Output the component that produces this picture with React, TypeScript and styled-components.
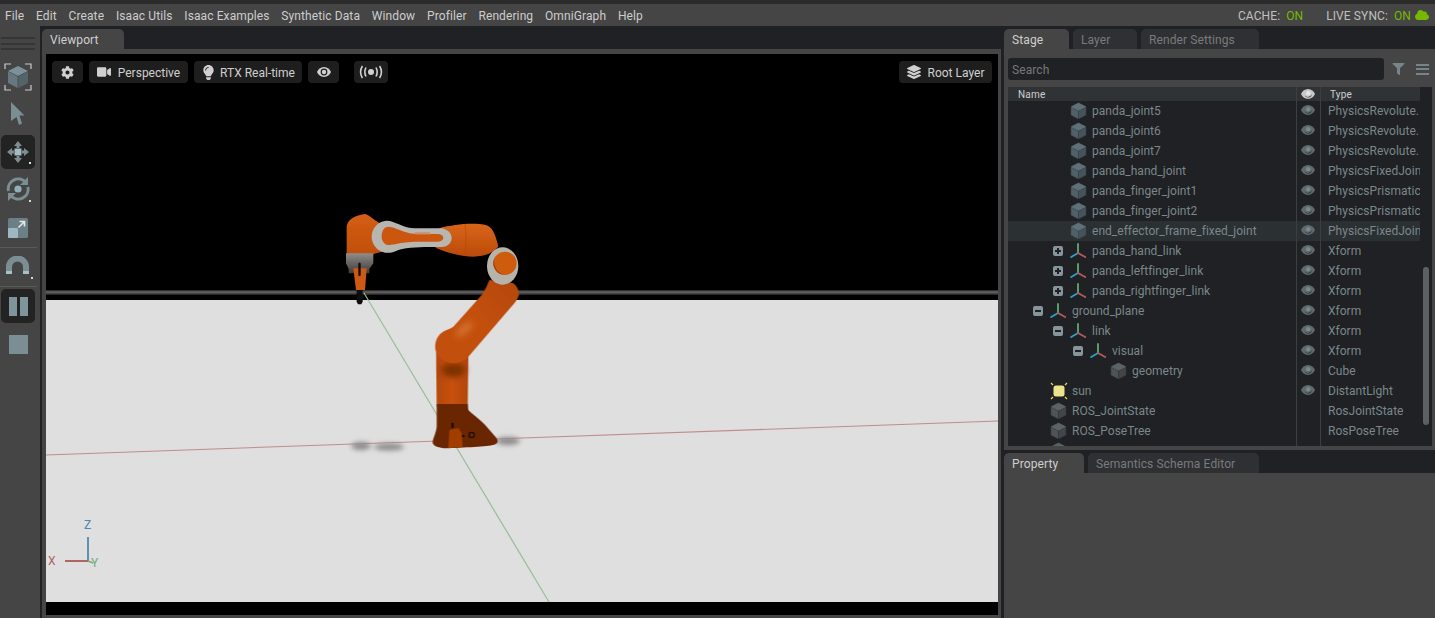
import React from 'react';
import styled, { createGlobalStyle } from 'styled-components';
import { FaCog, FaVideo, FaLightbulb, FaFilter, FaCloud, FaLayerGroup } from 'react-icons/fa';

const FONT = '"Roboto", "Liberation Sans", sans-serif';
const PANEL = '#454545';
const DARK = '#1f2124';

const GlobalStyle = createGlobalStyle`
  html, body { margin: 0; padding: 0; background: ${DARK}; overflow: hidden; }
  * { box-sizing: border-box; }
  body { font-family: ${FONT}; }
`;

const Page = styled.div`
  width: 1435px;
  height: 618px;
  display: flex;
  flex-direction: column;
  padding-top: 4px;
  background: #2b2b2b;
  overflow: hidden;
`;

const MenuBar = styled.div`
  height: 22px;
  flex: none;
  display: flex;
  align-items: center;
  justify-content: space-between;
  padding: 2px 6px 0 5px;
  background: ${PANEL};
  font-size: 12px;
  letter-spacing: 0.1px;
  color: #cdcdcd;
`;

const MenuItems = styled.div`
  display: flex;
  gap: 11.8px;
`;

const Status = styled.div`
  display: flex;
  align-items: center;
  font-size: 12px;
  color: #c0c0c0;
`;

const StatusOn = styled.span<{ $gap: number }>`
  color: #76b900;
  margin-left: 6px;
  margin-right: ${(p) => p.$gap}px;
`;

const CloudIcon = styled(FaCloud)`
  color: #76b900;
  width: 14px;
  height: 12px;
  margin-left: 4px;
  margin-top: -2px;
`;

const Workspace = styled.div`
  flex: 1;
  min-height: 0;
  display: flex;
  background: ${DARK};
`;

const ToolRail = styled.div`
  width: 40px;
  flex: none;
  display: flex;
  flex-direction: column;
  align-items: flex-start;
  padding: 11px 0 0 1px;
  background: ${PANEL};
`;

const Grip = styled.div`
  width: 34px;
  height: 13px;
  margin-bottom: 12px;
  border-top: 2px solid #353535;
  border-bottom: 2px solid #353535;
  &::after {
    content: '';
    display: block;
    height: 2px;
    margin-top: 3.5px;
    background: #353535;
  }
`;

const ToolSlot = styled.div<{ $active?: boolean; $height: number }>`
  width: 34px;
  height: ${(p) => p.$height}px;
  flex: none;
  display: flex;
  align-items: center;
  justify-content: center;
  border-radius: 5px;
  background: ${(p) => (p.$active ? '#232323' : 'transparent')};
`;

const RailLine = styled.div`
  width: 37px;
  height: 1px;
  flex: none;
  margin-left: -1px;
  background: #5a5a5a;
`;

const Gutter = styled.div<{ $width: number }>`
  width: ${(p) => p.$width}px;
  flex: none;
`;

const ViewportColumn = styled.div`
  width: 959px;
  flex: none;
  display: flex;
  flex-direction: column;
`;

const PropertyColumn = styled.div`
  width: 431px;
  flex: none;
  display: flex;
  flex-direction: column;
`;

const TabStrip = styled.div`
  height: 23px;
  flex: none;
  display: flex;
  align-items: flex-end;
  gap: 4px;
  background: ${DARK};
`;

const Tab = styled.div<{ $active?: boolean; $width: number }>`
  width: ${(p) => p.$width}px;
  height: 20px;
  padding: 2px 0 0 8px;
  display: flex;
  align-items: center;
  font-size: 12px;
  letter-spacing: 0.1px;
  border-radius: 5px 5px 0 0;
  color: ${(p) => (p.$active ? '#cfcfcf' : '#7a7a7a')};
  background: ${(p) => (p.$active ? PANEL : '#2f3033')};
`;

const ViewportFrame = styled.div`
  flex: 1;
  min-height: 0;
  padding: 5px 3px 3px 4px;
  background: ${PANEL};
`;

const Viewport = styled.div`
  position: relative;
  width: 100%;
  height: 100%;
  background: #000;
  overflow: hidden;
`;

const SceneSvg = styled.svg`
  display: block;
  width: 100%;
  height: 100%;
`;

const OverlayBar = styled.div`
  position: absolute;
  top: 7px;
  left: 6px;
  right: 6px;
  display: flex;
  gap: 6px;
`;

const OverlayButton = styled.div<{ $width: number; $push?: number; $right?: boolean; $gap?: number }>`
  width: ${(p) => p.$width}px;
  height: 22px;
  margin-left: ${(p) => (p.$right ? 'auto' : `${p.$push ?? 0}px`)};
  display: flex;
  align-items: center;
  justify-content: center;
  gap: ${(p) => p.$gap ?? 7}px;
  border-radius: 4px;
  background: #1e1e1e;
  color: #d0d0d0;
  font-size: 12px;
  svg {
    flex: none;
  }
`;

const OverlayLabel = styled.span`
  padding-top: 2px;
`;

const StagePanel = styled.div`
  height: 401px;
  flex: none;
  padding: 9px 3px 4px 4px;
  background: ${PANEL};
  display: flex;
  flex-direction: column;
`;

const SearchRow = styled.div`
  display: flex;
  align-items: center;
  height: 22px;
  flex: none;
  margin-bottom: 7px;
`;

const SearchBox = styled.div`
  width: 376px;
  height: 22px;
  flex: none;
  padding: 2px 0 0 4px;
  display: flex;
  align-items: center;
  font-size: 12px;
  letter-spacing: 0.1px;
  color: #777;
  background: ${DARK};
  border-radius: 3px;
`;

const FilterIcon = styled(FaFilter)`
  width: 13px;
  height: 12px;
  margin-left: 8px;
  color: #77858a;
`;

const MenuLines = styled.div`
  width: 13px;
  height: 11px;
  margin-left: 11px;
  border-top: 2px solid #77858a;
  border-bottom: 2px solid #77858a;
  &::after {
    content: '';
    display: block;
    height: 2px;
    margin-top: 2.5px;
    background: #77858a;
  }
`;

const TreeArea = styled.div`
  position: relative;
  flex: 1;
  min-height: 0;
  overflow: hidden;
  background: ${DARK};
`;

const HeaderRow = styled.div`
  width: 412px;
  height: 14px;
  display: flex;
  align-items: center;
  background: #2f3336;
  font-size: 10px;
  letter-spacing: 0.2px;
  color: #cfcfcf;
  padding-top: 1px;
`;

const Row = styled.div<{ $selected?: boolean }>`
  width: 412px;
  height: 20px;
  display: flex;
  align-items: center;
  font-size: 12px;
  letter-spacing: 0.02px;
  color: #7b878b;
  background: ${(p) => (p.$selected ? '#2b3033' : 'transparent')};
`;

const NameCell = styled.div<{ $level: number }>`
  width: 288px;
  height: 100%;
  flex: none;
  display: flex;
  align-items: center;
  padding-left: ${(p) => 25 + p.$level * 20}px;
  white-space: nowrap;
`;

const HeaderName = styled.div`
  width: 288px;
  flex: none;
  padding-left: 10px;
`;

const EyeCell = styled.div`
  width: 24px;
  height: 100%;
  flex: none;
  display: flex;
  align-items: flex-start;
  justify-content: center;
  padding-top: 4px;
`;

const HeaderEye = styled.div`
  width: 24px;
  flex: none;
  display: flex;
  justify-content: center;
  margin-top: -1px;
`;

const TypeCell = styled.div`
  flex: 1;
  min-width: 0;
  padding-left: 8px;
  overflow: hidden;
  white-space: nowrap;
`;

const HeaderType = styled.div`
  padding-left: 10px;
`;

const Expander = styled.div`
  width: 17px;
  flex: none;
  display: flex;
`;

const IconSlot = styled.div`
  width: 22px;
  flex: none;
  display: flex;
`;

const ColumnLine = styled.div<{ $left: number }>`
  position: absolute;
  top: 0;
  bottom: 0;
  left: ${(p) => p.$left}px;
  width: 1px;
  background: #3c3f42;
`;

const ScrollThumb = styled.div`
  position: absolute;
  top: 180px;
  left: 415px;
  width: 6px;
  height: 158px;
  border-radius: 3px;
  background: #5d6063;
`;

const PropertyBody = styled.div`
  flex: 1;
  background: ${PANEL};
`;

const CubeIcon = ({ top, left, right }: { top: string; left: string; right: string }) => (
  <svg width="17" height="18" viewBox="0 0 17 18" strokeLinejoin="round">
    <path d="M8.5 1.2 15.6 4.8 8.5 8.4 1.4 4.8Z" fill={top} stroke={top} />
    <path d="M1.2 5.6 8.1 9.2v7.4L1.2 13Z" fill={left} stroke={left} strokeWidth="0.6" />
    <path d="M15.8 5.6 8.9 9.2v7.4l6.9-3.6Z" fill={right} stroke={right} strokeWidth="0.6" />
  </svg>
);

const XformIcon = () => (
  <svg width="17" height="18" viewBox="0 0 17 18" fill="none" strokeWidth="1.9" strokeLinecap="round">
    <path d="M8 10.5V2" stroke="#5fa36c" />
    <path d="M8 11 1.2 15" stroke="#2f9fc4" />
    <path d="M8 11 15.2 15" stroke="#b5595a" />
  </svg>
);

const SunIcon = () => (
  <svg width="18" height="18" viewBox="0 0 18 18" fill="none">
    <rect x="3.5" y="3.5" width="11" height="11" rx="2.5" fill="#ece48c" />
    <path d="M1 1 3 3M17 1 15 3M1 17 3 15M17 17 15 15" stroke="#e8d85c" strokeWidth="1.2" />
  </svg>
);

const TreeToggle = ({ open }: { open: boolean }) => (
  <svg width="10" height="10" viewBox="0 0 10 10">
    <rect width="10" height="10" rx="2" fill="#87959a" />
    <rect x="2" y="4" width="6" height="2" fill={DARK} />
    {!open && <rect x="4" y="2" width="2" height="6" fill={DARK} />}
  </svg>
);

const EyeIcon = ({ color = '#5f6a6e', hole = '#2a2f32', pupil = '#7d888b' }: { color?: string; hole?: string; pupil?: string }) => (
  <svg width="14" height="10" viewBox="0 0 14 10">
    <path d="M7 0C3.6 0 1.2 2.4 0 5c1.2 2.6 3.6 5 7 5s5.8-2.4 7-5C12.8 2.4 10.4 0 7 0Z" fill={color} />
    <path d="M3.6 6.2A3.8 3.8 0 0 0 10.9 5.2 4.2 4.2 0 0 1 3.6 6.2Z" fill={hole} />
    <circle cx="7.2" cy="4.2" r="2.2" fill={pupil} />
  </svg>
);

const ToolbarEye = () => (
  <svg width="14" height="10" viewBox="0 0 14 10">
    <path d="M7 0C3.6 0 1.2 2.4 0 5c1.2 2.6 3.6 5 7 5s5.8-2.4 7-5C12.8 2.4 10.4 0 7 0Z" fill="#d0d0d0" />
    <circle cx="7" cy="5" r="3.4" fill="#1e1e1e" />
    <circle cx="7" cy="5" r="2.2" fill="#d0d0d0" />
  </svg>
);

const BroadcastIcon = () => (
  <svg width="24" height="14" viewBox="0 0 24 14" fill="none" stroke="#d0d0d0" strokeWidth="1.6">
    <circle cx="12" cy="7" r="3" fill="#d0d0d0" stroke="none" />
    <path d="M7 2.5C5.6 5.2 5.6 8.8 7 11.5M17 2.5c1.4 2.7 1.4 6.3 0 9" />
    <path d="M3.4 1C1.2 4.6 1.2 9.4 3.4 13M20.6 1c2.2 3.6 2.2 8.4 0 12" />
  </svg>
);

const RailCube = () => (
  <svg width="28" height="28" viewBox="0 0 28 28" fill="none">
    <path d="M1 6V1h6M21 1h6v5M1 22v5h6M27 22v5h-6" stroke="#c8cdcf" strokeWidth="1.2" />
    <path d="M14 3 24 8 14 13 4 8Z" fill="#7b9098" />
    <path d="M4 8.5 13.6 13.5V25L4 20Z" fill="#66787f" />
    <path d="M24 8.5 14.4 13.5V25L24 20Z" fill="#52636a" />
  </svg>
);

const RailArrow = () => (
  <svg width="16" height="24" viewBox="0 0 16 24">
    <path d="M1 0 14.5 13.5H9.5L12 21.5 9 23 6.5 15 1 19Z" fill="#7b8e93" />
  </svg>
);

const RailMove = () => (
  <svg width="34" height="34" viewBox="0 0 34 34" fill="#7b8e93">
    <rect x="13.5" y="13.5" width="7" height="7" fill="#a3bbc2" />
    <path d="M17 6 21 11H18.5V13H15.5V11H13ZM17 28 13 23H15.5V21H18.5V23H21ZM6 17 11 13V15.5H13V18.5H11V21ZM28 17 23 21V18.5H21V15.5H23V13Z" />
    <rect x="28" y="27" width="2" height="2" fill="#e0e0e0" />
  </svg>
);

const RailRotate = () => (
  <svg width="30" height="26" viewBox="0 0 30 26" fill="none">
    <circle cx="15" cy="12" r="3.6" fill="#8fb0b8" />
    <path d="M5.5 14a10 10 0 0 1 17-9" stroke="#7b8e93" strokeWidth="3" />
    <path d="M25 10a10 10 0 0 1-17 9" stroke="#7b8e93" strokeWidth="3" />
    <path d="M25 0v8h-8ZM5 24v-8h8Z" fill="#7b8e93" />
    <rect x="26" y="23" width="2" height="2" fill="#d8d8d8" />
  </svg>
);

const RailScale = () => (
  <svg width="20" height="20" viewBox="0 0 20 20">
    <rect width="20" height="20" rx="1.5" fill="#6a7f86" />
    <rect y="10" width="10" height="10" rx="1" fill="#9fb8bf" />
    <path d="M10.5 9.5 16 4M11.5 3.5H16.5V8.5" stroke="#e6e6e6" strokeWidth="1.6" fill="none" />
  </svg>
);

const RailMagnet = () => (
  <svg width="30" height="24" viewBox="0 0 30 24" fill="none">
    <path d="M6 15V11a8.5 8.5 0 0 1 17 0v4" stroke="#7b8e93" strokeWidth="6" />
    <rect x="3" y="15" width="6" height="3" fill="#a8c0c6" />
    <rect x="20" y="15" width="6" height="3" fill="#a8c0c6" />
    <rect x="28" y="21" width="2" height="2" fill="#d8d8d8" />
  </svg>
);

const RailPause = () => (
  <svg width="19" height="19" viewBox="0 0 19 19" fill="#7e959b">
    <rect width="8" height="19" />
    <rect x="11" width="8" height="19" />
  </svg>
);

const RailStop = () => (
  <svg width="19" height="19" viewBox="0 0 19 19">
    <rect width="19" height="19" fill="#7b8e93" />
  </svg>
);

// Robot shapes are traced at 3x, hence the scale on the group.
const Robot = () => (
  <g transform="translate(330 200) scale(0.3333)" filter="url(#edge)">
    <path d="M318 430 415 465 413 620H320Z" fill="url(#lower)" />
    <ellipse cx="370" cy="510" rx="36" ry="22" fill="#7c3005" filter="url(#smudge)" />
    <path
      d="M320 612H413L415 630C435 650 455 662 470 680L500 715C505 722 504 730 496 733 480 740 420 742 350 745 325 744 310 738 308 728 308 715 318 700 320 680Z"
      fill="#6b2703"
    />
    <path d="M355 745 358 690 385 684 395 700 398 741Z" fill="#a23e05" />
    <circle cx="425" cy="705" r="8" fill="none" stroke="#1d0c00" strokeWidth="4" />
    <rect x="364" y="668" width="7" height="16" rx="3" fill="#1a0a00" />
    <circle cx="400" cy="708" r="4" fill="#1a0a00" />

    <path
      d="M478 240 550 250C562 260 568 272 567 285 562 300 552 312 540 325L415 470C400 484 385 490 370 490 345 488 322 472 316 448 313 425 322 408 335 398 345 390 358 388 370 380L455 285C465 272 472 255 478 240Z"
      fill="url(#arm)"
    />
    <path d="M380 395C395 372 415 360 428 368 432 382 410 405 385 412 375 412 375 402 380 395Z" fill="#e08a4c" opacity="0.55" filter="url(#smudge)" />

    <path
      d="M330 84C370 74 430 66 470 76 490 84 498 110 505 140 490 158 470 168 430 170 395 170 355 160 320 145L290 120Z"
      fill="url(#fore)"
    />
    <path d="M405 72C409 100 409 135 405 168" stroke="#a94407" strokeWidth="1.5" fill="none" />

    <path
      d="M50 80C52 62 70 46 105 42 118 44 128 58 150 70L175 150 130 162H50Z"
      fill="url(#head)"
    />

    <path
      d="M170 62C195 62 220 85 255 85L330 85C352 86 366 100 365 116 363 132 350 140 335 141 290 141 240 140 205 150 190 157 178 160 165 158 140 154 124 130 125 108 127 82 146 63 170 62Z"
      fill="#b8b6b1"
    />
    <path
      d="M176 80C200 82 220 100 255 101L325 102C335 103 341 109 340 115 338 122 332 125 322 125L255 125C225 125 200 132 178 135 165 136 155 124 155 110 155 92 162 80 176 80Z"
      fill="#cb5610"
    />
    <path d="M255 96H300V104H255Z" fill="#c98a68" opacity="0.7" />

    <ellipse cx="518" cy="198" rx="47" ry="56" fill="#b6b3ad" />
    <circle cx="525" cy="190" r="35" fill="#cf5c10" />
    <path d="M495 172A35 35 0 0 0 525 225 40 40 0 0 1 495 172Z" fill="#9c4108" />

    <path d="M48 160H130V190L118 206V220H56V206L48 190Z" fill="url(#grip)" />
    <path d="M70 205H110L105 270H78Z" fill="#cc5a12" />
    <rect x="85" y="188" width="7" height="40" rx="3" fill="#120a04" />
    <path d="M80 270H98V305L94 313H84L80 305Z" fill="#0d0d0d" />
  </g>
);

// Scene is drawn in page coordinates, so the viewBox starts at the viewport corner.
const Scene = () => (
  <SceneSvg viewBox="46 54 952 561" preserveAspectRatio="none">
    <defs>
      <linearGradient id="lower" x1="0" y1="0" x2="1" y2="0">
        <stop offset="0" stopColor="#b5460a" />
        <stop offset="0.5" stopColor="#c8510c" />
        <stop offset="1" stopColor="#b2460a" />
      </linearGradient>
      <linearGradient id="arm" x1="0" y1="1" x2="1" y2="0">
        <stop offset="0" stopColor="#c2500c" />
        <stop offset="0.5" stopColor="#c4500c" />
        <stop offset="1" stopColor="#b34806" />
      </linearGradient>
      <linearGradient id="fore" x1="0" y1="0" x2="0" y2="1">
        <stop offset="0" stopColor="#d8651a" />
        <stop offset="1" stopColor="#bb4a08" />
      </linearGradient>
      <linearGradient id="head" x1="0" y1="0" x2="0" y2="1">
        <stop offset="0" stopColor="#d45e14" />
        <stop offset="1" stopColor="#c14f0b" />
      </linearGradient>
      <linearGradient id="grip" x1="0" y1="0" x2="0" y2="1">
        <stop offset="0" stopColor="#8f8c89" />
        <stop offset="0.6" stopColor="#5f5c5a" />
        <stop offset="1" stopColor="#3d3b3a" />
      </linearGradient>
      <linearGradient id="band" x1="0" y1="0" x2="0" y2="1">
        <stop offset="0" stopColor="#1c1c1c" />
        <stop offset="0.4" stopColor="#6a6a6a" />
        <stop offset="1" stopColor="#1c1c1c" />
      </linearGradient>
      <filter id="soft" x="-60%" y="-150%" width="220%" height="400%">
        <feGaussianBlur stdDeviation="2.6" />
      </filter>
      <filter id="edge">
        <feGaussianBlur stdDeviation="1.2" />
      </filter>
      <filter id="smudge" x="-50%" y="-50%" width="200%" height="200%">
        <feGaussianBlur stdDeviation="9" />
      </filter>
    </defs>

    <rect x="46" y="54" width="952" height="561" fill="#000" />
    <rect x="46" y="290" width="952" height="5" fill="url(#band)" />
    <rect x="46" y="300" width="952" height="302" fill="#dfdfdf" />

    <path d="M46 455 998 421" stroke="#c08c8c" strokeWidth="1.1" />
    <path d="M364 293 549 602" stroke="#98bd98" strokeWidth="1.2" />

    <g filter="url(#soft)" fill="#8a8a8a">
      <ellipse cx="361" cy="446" rx="10" ry="4" />
      <ellipse cx="389" cy="447" rx="15" ry="3.5" />
      <ellipse cx="508" cy="441" rx="12" ry="4" />
    </g>

    <Robot />

    <g fontFamily={FONT} fontSize="12">
      <path d="M88 537V561" stroke="#5f8fb4" strokeWidth="2" />
      <path d="M65 561H88" stroke="#b06565" strokeWidth="2" />
      <path d="M88 561 93 563" stroke="#74ad7c" strokeWidth="1.4" />
      <text x="84" y="529" fill="#4f86b2">Z</text>
      <text x="48" y="565" fill="#b06060">X</text>
      <text x="91" y="567" fill="#6fae7b">Y</text>
    </g>
  </SceneSvg>
);

type Kind = 'cube' | 'xform' | 'sun' | 'ros';

interface Prim {
  name: string;
  type: string;
  level: number;
  kind: Kind;
  toggle?: 'open' | 'closed';
  visible?: boolean;
  selected?: boolean;
}

const PRIMS: Prim[] = [
  { name: 'panda_joint5', type: 'PhysicsRevolute.', level: 1, kind: 'cube', visible: true },
  { name: 'panda_joint6', type: 'PhysicsRevolute.', level: 1, kind: 'cube', visible: true },
  { name: 'panda_joint7', type: 'PhysicsRevolute.', level: 1, kind: 'cube', visible: true },
  { name: 'panda_hand_joint', type: 'PhysicsFixedJoint', level: 1, kind: 'cube', visible: true },
  { name: 'panda_finger_joint1', type: 'PhysicsPrismatic', level: 1, kind: 'cube', visible: true },
  { name: 'panda_finger_joint2', type: 'PhysicsPrismatic', level: 1, kind: 'cube', visible: true },
  { name: 'end_effector_frame_fixed_joint', type: 'PhysicsFixedJoint', level: 1, kind: 'cube', visible: true, selected: true },
  { name: 'panda_hand_link', type: 'Xform', level: 1, kind: 'xform', toggle: 'closed', visible: true },
  { name: 'panda_leftfinger_link', type: 'Xform', level: 1, kind: 'xform', toggle: 'closed', visible: true },
  { name: 'panda_rightfinger_link', type: 'Xform', level: 1, kind: 'xform', toggle: 'closed', visible: true },
  { name: 'ground_plane', type: 'Xform', level: 0, kind: 'xform', toggle: 'open', visible: true },
  { name: 'link', type: 'Xform', level: 1, kind: 'xform', toggle: 'open', visible: true },
  { name: 'visual', type: 'Xform', level: 2, kind: 'xform', toggle: 'open', visible: true },
  { name: 'geometry', type: 'Cube', level: 3, kind: 'ros', visible: true },
  { name: 'sun', type: 'DistantLight', level: 0, kind: 'sun', visible: true },
  { name: 'ROS_JointState', type: 'RosJointState', level: 0, kind: 'ros' },
  { name: 'ROS_PoseTree', type: 'RosPoseTree', level: 0, kind: 'ros' },
  { name: '', type: '', level: 0, kind: 'ros' },
];

const MENU = [
  'File',
  'Edit',
  'Create',
  'Isaac Utils',
  'Isaac Examples',
  'Synthetic Data',
  'Window',
  'Profiler',
  'Rendering',
  'OmniGraph',
  'Help',
];

const renderPrimIcon = (kind: Kind): JSX.Element => {
  if (kind === 'xform') {
    return <XformIcon />;
  }
  if (kind === 'sun') {
    return <SunIcon />;
  }
  if (kind === 'ros') {
    return <CubeIcon top="#5c6265" left="#4d5356" right="#424649" />;
  }
  return <CubeIcon top="#5f7178" left="#4f6068" right="#45545a" />;
};

const App = (): JSX.Element => {
  return (
    <Page>
      <GlobalStyle />
      <MenuBar>
        <MenuItems>
          {MENU.map((item) => (
            <span key={item}>{item}</span>
          ))}
        </MenuItems>
        <Status>
          CACHE:
          <StatusOn $gap={23}>ON</StatusOn>
          LIVE SYNC:
          <StatusOn $gap={0}>ON</StatusOn>
          <CloudIcon />
        </Status>
      </MenuBar>

      <Workspace>
        <ToolRail>
          <Grip />
          <ToolSlot $height={29}><RailCube /></ToolSlot>
          <ToolSlot $height={11} />
          <ToolSlot $height={24}><RailArrow /></ToolSlot>
          <ToolSlot $height={9} />
          <ToolSlot $active $height={34}><RailMove /></ToolSlot>
          <ToolSlot $height={8} />
          <ToolSlot $height={26}><RailRotate /></ToolSlot>
          <ToolSlot $height={14} />
          <ToolSlot $height={22}><RailScale /></ToolSlot>
          <ToolSlot $height={8} />
          <RailLine />
          <ToolSlot $height={8} />
          <ToolSlot $height={24}><RailMagnet /></ToolSlot>
          <ToolSlot $height={6} />
          <RailLine />
          <ToolSlot $height={2} />
          <ToolSlot $active $height={34}><RailPause /></ToolSlot>
          <ToolSlot $height={11} />
          <ToolSlot $height={20}><RailStop /></ToolSlot>
        </ToolRail>

        <Gutter $width={2} />

        <ViewportColumn>
          <TabStrip>
            <Tab $active $width={82}>Viewport</Tab>
          </TabStrip>
          <ViewportFrame>
            <Viewport>
              <Scene />
              <OverlayBar>
                <OverlayButton $width={31}><FaCog size={13} /></OverlayButton>
                <OverlayButton $width={99}><FaVideo size={14} /><OverlayLabel>Perspective</OverlayLabel></OverlayButton>
                <OverlayButton $width={108} $gap={4}><FaLightbulb size={15} /><OverlayLabel>RTX Real-time</OverlayLabel></OverlayButton>
                <OverlayButton $width={31}><ToolbarEye /></OverlayButton>
                <OverlayButton $width={34} $push={9}><BroadcastIcon /></OverlayButton>
                <OverlayButton $width={93} $right><FaLayerGroup size={14} /><OverlayLabel>Root Layer</OverlayLabel></OverlayButton>
              </OverlayBar>
            </Viewport>
          </ViewportFrame>
        </ViewportColumn>

        <Gutter $width={3} />

        <PropertyColumn>
          <TabStrip>
            <Tab $active $width={65}>Stage</Tab>
            <Tab $width={64}>Layer</Tab>
            <Tab $width={118}>Render Settings</Tab>
          </TabStrip>
          <StagePanel>
            <SearchRow>
              <SearchBox>Search</SearchBox>
              <FilterIcon />
              <MenuLines />
            </SearchRow>
            <TreeArea>
              <HeaderRow>
                <HeaderName>Name</HeaderName>
                <HeaderEye><EyeIcon color="#c8c8c8" hole="#3a3d40" pupil="#e6e6e6" /></HeaderEye>
                <HeaderType>Type</HeaderType>
              </HeaderRow>
              {PRIMS.map((prim, index) => (
                <Row key={`${prim.name}-${index}`} $selected={prim.selected}>
                  <NameCell $level={prim.level}>
                    <Expander>
                      {prim.toggle && <TreeToggle open={prim.toggle === 'open'} />}
                    </Expander>
                    <IconSlot>{renderPrimIcon(prim.kind)}</IconSlot>
                    {prim.name}
                  </NameCell>
                  <EyeCell>{prim.visible && <EyeIcon />}</EyeCell>
                  <TypeCell>{prim.type}</TypeCell>
                </Row>
              ))}
              <ColumnLine $left={288} />
              <ColumnLine $left={312} />
              <ScrollThumb />
            </TreeArea>
          </StagePanel>
          <TabStrip>
            <Tab $active $width={80}>Property</Tab>
            <Tab $width={171}>Semantics Schema Editor</Tab>
          </TabStrip>
          <PropertyBody />
        </PropertyColumn>
      </Workspace>
    </Page>
  );
};

export default App;
